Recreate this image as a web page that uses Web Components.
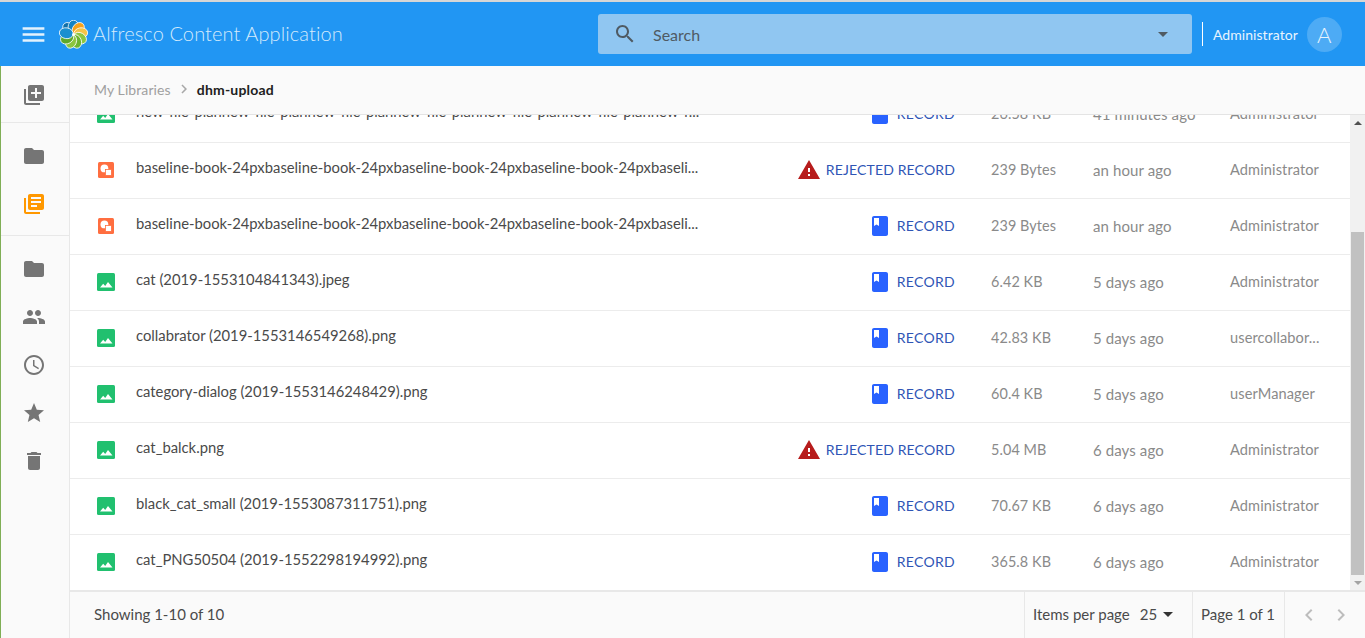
<!DOCTYPE html>
<html lang="en">
<head>
<meta charset="utf-8">
<title>Alfresco Content Application</title>
<style>
    html, body { margin: 0; height: 100%; overflow: hidden; }
    body { font-family: Lato, "Noto Sans", sans-serif; background: #fff; }
</style>
</head>
<body>
<aca-shell></aca-shell>

<script>
const ICONS = {
    menu: 'M3 18h18v-2H3v2zm0-5h18v-2H3v2zm0-7v2h18V6H3z',
    search: 'M15.5 14h-.79l-.28-.27C15.41 12.59 16 11.11 16 9.5 16 5.91 13.09 3 9.5 3S3 5.91 3 9.5 5.91 16 9.5 16c1.61 0 3.09-.59 4.23-1.57l.27.28v.79l5 4.99L20.49 19l-4.99-5zm-6 0C7.01 14 5 11.99 5 9.5S7.01 5 9.5 5 14 7.01 14 9.5 11.99 14 9.5 14z',
    libraryAdd: 'M4 6H2v14c0 1.1.9 2 2 2h14v-2H4V6zm16-4H8c-1.1 0-2 .9-2 2v12c0 1.1.9 2 2 2h12c1.1 0 2-.9 2-2V4c0-1.1-.9-2-2-2zm-1 9h-4v4h-2v-4H9V9h4V5h2v4h4v2z',
    libraryBooks: 'M4 6H2v14c0 1.1.9 2 2 2h14v-2H4V6zm16-4H8c-1.1 0-2 .9-2 2v12c0 1.1.9 2 2 2h12c1.1 0 2-.9 2-2V4c0-1.1-.9-2-2-2zm-1 9H9V9h10v2zm-4 4H9v-2h6v2zm4-8H9V5h10v2z',
    folder: 'M10 4H4c-1.1 0-1.99.9-1.99 2L2 18c0 1.1.9 2 2 2h16c1.1 0 2-.9 2-2V8c0-1.1-.9-2-2-2h-8l-2-2z',
    people: 'M16 11c1.66 0 2.99-1.34 2.99-3S17.66 5 16 5c-1.66 0-3 1.34-3 3s1.34 3 3 3zm-8 0c1.66 0 2.99-1.34 2.99-3S9.66 5 8 5C6.34 5 5 6.34 5 8s1.34 3 3 3zm0 2c-2.33 0-7 1.17-7 3.5V19h14v-2.5c0-2.33-4.67-3.5-7-3.5zm8 0c-.29 0-.62.02-.97.05 1.16.84 1.97 1.97 1.97 3.45V19h6v-2.5c0-2.33-4.67-3.5-7-3.5z',
    schedule: 'M11.99 2C6.47 2 2 6.48 2 12s4.47 10 9.99 10C17.52 22 22 17.52 22 12S17.52 2 11.99 2zM12 20c-4.42 0-8-3.58-8-8s3.58-8 8-8 8 3.58 8 8-3.58 8-8 8zm.5-13H11v6l5.25 3.15.75-1.23-4.5-2.67z',
    star: 'M12 17.27L18.18 21l-1.64-7.03L22 9.24l-7.19-.61L12 2 9.19 8.63 2 9.24l5.46 4.73L5.82 21z',
    trash: 'M6 19c0 1.1.9 2 2 2h8c1.1 0 2-.9 2-2V7H6v12zM19 4h-3.5l-1-1h-5l-1 1H5v2h14V4z',
    warning: 'M1 21h22L12 2 1 21zm12-3h-2v-2h2v2zm0-4h-2v-4h2v4z',
    book: 'M18 2H6c-1.1 0-2 .9-2 2v16c0 1.1.9 2 2 2h12c1.1 0 2-.9 2-2V4c0-1.1-.9-2-2-2zM6 4h5v8l-2.5-1.5L6 12V4z',
    chevronRight: 'M10 6L8.59 7.41 13.17 12l-4.58 4.59L10 18l6-6z',
    chevronLeft: 'M15.41 7.41L14 6l-6 6 6 6 1.41-1.41L10.83 12z',
    dropDown: 'M7 10l5 5 5-5z'
};

class AcaIcon extends HTMLElement {
    connectedCallback() {
        const size = this.getAttribute('size') || 24;
        const root = this.shadowRoot || this.attachShadow({ mode: 'open' });
        root.innerHTML = `
            <style>
                :host { display: inline-flex; flex: none; color: inherit; }
                svg { display: block; fill: currentColor; }
            </style>
            <svg width="${size}" height="${size}" viewBox="0 0 24 24"><path d="${ICONS[this.getAttribute('name')]}"/></svg>
        `;
    }
}

class AcaLogo extends HTMLElement {
    connectedCallback() {
        // petals of the flower, clockwise from the top left
        const colors = ['#0f6fa8', '#1583c4', '#f7a21b', '#f6c445', '#8cc63f', '#6db52f', '#8cc63f', '#5fa82a', '#1b8fcf'];
        const petals = colors.map((c, i) =>
            `<ellipse cx="15" cy="7.4" rx="5.6" ry="7.2" fill="${c}" stroke="#fff" stroke-width=".8" transform="rotate(${i * 40 - 40} 15 15)"/>`
        ).join('');
        this.attachShadow({ mode: 'open' }).innerHTML = `
            <style>:host { display: inline-flex; flex: none; }</style>
            <svg width="29" height="29" viewBox="0 0 30 30">${petals}<circle cx="15" cy="15" r="1.4" fill="#fff"/></svg>
        `;
    }
}

class AcaHeader extends HTMLElement {
    connectedCallback() {
        this.attachShadow({ mode: 'open' }).innerHTML = `
            <style>
                :host {
                    display: flex;
                    align-items: center;
                    height: 64px;
                    background: #2196f3;
                    color: #fff;
                    flex: none;
                }
                .menu { margin-left: 19px; color: #e3f2fd; }
                aca-logo { margin-left: 11px; }
                .title { margin: -2px 0 0 5px; font-size: 20px; font-weight: 300; letter-spacing: .1px; color: #d3eafc; width: 505px; white-space: nowrap; }
                .search {
                    display: flex;
                    align-items: center;
                    box-sizing: border-box;
                    width: 594px;
                    height: 40px;
                    padding: 0 17px 0 15px;
                    border-radius: 3px;
                    background: #90c6f1;
                    color: #4f5a63;
                    font-size: 16px;
                }
                .search span { margin-left: 16px; margin-top: 1px; flex: 1; }
                .sep { width: 1px; height: 24px; margin: 0 10px; background: #fff; }
                .user { font-size: 14px; letter-spacing: .05px; color: #e8f4fe; }
                .avatar {
                    display: flex;
                    align-items: center;
                    justify-content: center;
                    width: 35px;
                    height: 35px;
                    margin-left: 9px;
                    border-radius: 50%;
                    background: #4dabf5;
                    font-size: 22px;
                    font-weight: 300;
                    color: #e8f4fe;
                }
            </style>
            <aca-icon class="menu" name="menu" size="29"></aca-icon>
            <aca-logo></aca-logo>
            <div class="title">Alfresco Content Application</div>
            <div class="search">
                <aca-icon name="search"></aca-icon>
                <span>Search</span>
                <aca-icon name="dropDown" size="24"></aca-icon>
            </div>
            <div class="sep"></div>
            <div class="user">Administrator</div>
            <div class="avatar">A</div>
        `;
    }
}

class AcaSidebar extends HTMLElement {
    connectedCallback() {
        this.attachShadow({ mode: 'open' }).innerHTML = `
            <style>
                :host {
                    display: block;
                    box-sizing: border-box;
                    width: 70px;
                    flex: none;
                    border-left: 1px solid #7fae55;
                    border-right: 1px solid #e8e8e8;
                    background: #fafafa;
                    color: #757575;
                }
                .group { display: flex; flex-direction: column; align-items: center; gap: 24px; border-bottom: 1px solid #e8e8e8; }
                .group.create { padding: 17px 0 15px; }
                .group.views { padding: 21px 0 19px; }
                .group.nav { padding: 21px 0 0; border-bottom: 0; }
                .active { color: #ff9800; }
                aca-icon { margin-left: -2px; }
            </style>
            <div class="group create"><aca-icon name="libraryAdd"></aca-icon></div>
            <div class="group views">
                <aca-icon name="folder"></aca-icon>
                <aca-icon class="active" name="libraryBooks"></aca-icon>
            </div>
            <div class="group nav">
                <aca-icon name="folder"></aca-icon>
                <aca-icon name="people"></aca-icon>
                <aca-icon name="schedule"></aca-icon>
                <aca-icon name="star"></aca-icon>
                <aca-icon name="trash"></aca-icon>
            </div>
        `;
    }
}

class AcaBreadcrumb extends HTMLElement {
    connectedCallback() {
        this.attachShadow({ mode: 'open' }).innerHTML = `
            <style>
                :host {
                    display: flex;
                    align-items: center;
                    box-sizing: border-box;
                    height: 49px;
                    flex: none;
                    padding: 0 24px 2px;
                    border-bottom: 1px solid #e4e4e4;
                    background: #fafafa;
                    font-size: 14px;
                    color: #a0a0a0;
                }
                aca-icon { margin: 0 4px 0 4px; color: #a8a8a8; }
                span { letter-spacing: .1px; }
                b { color: #212121; font-weight: 700; letter-spacing: .2px; }
            </style>
            <span>My Libraries</span>
            <aca-icon name="chevronRight" size="18"></aca-icon>
            <b>dhm-upload</b>
        `;
    }
}

class AcaRow extends HTMLElement {
    connectedCallback() {
        const type = this.getAttribute('type');
        const rejected = this.hasAttribute('rejected');
        const thumb = type === 'media'
            ? `<svg width="16" height="16" viewBox="0 0 16 16"><rect width="16" height="16" rx="1.5" fill="#ff6e40"/><circle cx="6.4" cy="6.4" r="3.9" fill="#fff"/><rect x="7.4" y="7.4" width="6" height="6" fill="#fff" stroke="#ff6e40" stroke-width=".8"/></svg>`
            : `<svg width="18" height="18" viewBox="0 0 18 18"><rect width="18" height="18" rx="1.5" fill="#21c06f"/><path d="M3 14.5l3.2-3.8 2 2.2L11 9l4.5 5.5z" fill="#fff"/></svg>`;
        const status = rejected
            ? `<aca-icon class="warn" name="warning"></aca-icon><span>REJECTED RECORD</span>`
            : `<aca-icon class="book" name="book"></aca-icon><span>RECORD</span>`;
        this.attachShadow({ mode: 'open' }).innerHTML = `
            <style>
                :host {
                    display: grid;
                    grid-template-columns: 66px 578px 241px 138px 137px 1fr;
                    align-items: center;
                    box-sizing: border-box;
                    height: 56px;
                    padding-bottom: 2px;
                    border-bottom: 1px solid #ececec;
                    font-size: 15px;
                    letter-spacing: .1px;
                    color: #8a8a8a;
                    white-space: nowrap;
                }
                .thumb { display: flex; justify-content: center; width: 18px; margin-left: 27px; }
                .name { color: #4a4a4a; margin-top: -6px; font-size: 14.8px; letter-spacing: 0; overflow: hidden; }
                .status { display: flex; align-items: center; justify-content: flex-end; font-size: 14px; letter-spacing: .15px; color: #2f55b5; }
                .status span { margin-left: 5px; }
                .warn { color: #b71c1c; }
                .book { color: #2962ff; }
                .book + span { letter-spacing: .3px; }
                .size { padding-left: 36px; font-size: 14.4px; }
                .by { font-size: 14.6px; }
            </style>
            <div class="thumb">${thumb}</div>
            <div class="name"><slot name="name"></slot></div>
            <div class="status">${status}</div>
            <div class="size"><slot name="size"></slot></div>
            <div><slot name="modified"></slot></div>
            <div class="by"><slot name="by"></slot></div>
        `;
    }
}

class AcaScrollbar extends HTMLElement {
    connectedCallback() {
        this.attachShadow({ mode: 'open' }).innerHTML = `
            <style>
                :host { display: flex; flex-direction: column; width: 15px; flex: none; background: #f1f1f1; }
                .arrow { height: 15px; display: flex; align-items: center; justify-content: center; flex: none; }
                .up { border: 4px solid transparent; border-top: 0; border-bottom: 4px solid #505050; }
                .down { border: 4px solid transparent; border-bottom: 0; border-top: 4px solid #a3a3a3; }
                .track { flex: 1; padding-top: 102px; padding-left: 1px; }
                .thumb { height: 343px; width: 13px; background: #c1c1c1; }
            </style>
            <div class="arrow"><div class="up"></div></div>
            <div class="track"><div class="thumb"></div></div>
            <div class="arrow"><div class="down"></div></div>
        `;
    }
}

class AcaFooter extends HTMLElement {
    connectedCallback() {
        this.attachShadow({ mode: 'open' }).innerHTML = `
            <style>
                :host {
                    display: flex;
                    align-items: stretch;
                    box-sizing: border-box;
                    height: 48px;
                    flex: none;
                    border-top: 2px solid #e8e8e8;
                    background: #fafafa;
                    font-size: 15px;
                    color: #4a4a4a;
                }
                .cell { display: flex; align-items: center; box-sizing: border-box; border-left: 1px solid #e8e8e8; padding-bottom: 2px; }
                .range { flex: 1; border: 0; padding-left: 24px; }
                .size { width: 168px; padding-left: 8px; }
                .size b { font-weight: 400; margin-left: 10px; }
                .size aca-icon { margin-left: -1px; color: #333; }
                .page { width: 92px; padding-left: 8px; }
                .nav { width: 81px; gap: 8px; padding-left: 12px; padding-bottom: 0; color: #bdbdbd; }
            </style>
            <div class="cell range">Showing 1-10 of 10</div>
            <div class="cell size">Items per page <b>25</b><aca-icon name="dropDown"></aca-icon></div>
            <div class="cell page">Page 1 of 1</div>
            <div class="cell nav"><aca-icon name="chevronLeft"></aca-icon><aca-icon name="chevronRight"></aca-icon></div>
        `;
    }
}

class AcaShell extends HTMLElement {
    connectedCallback() {
        const plan = 'new-file-plan'.repeat(6) + 'new-f...';
        const book = 'baseline-book-24px'.repeat(4) + 'baseli...';
        const rows = [
            ['image', plan, '', '26.58 KB', '41 minutes ago', 'Administrator'],
            ['media', book, 'rejected', '239 Bytes', 'an hour ago', 'Administrator'],
            ['media', book, '', '239 Bytes', 'an hour ago', 'Administrator'],
            ['image', 'cat (2019-1553104841343).jpeg', '', '6.42 KB', '5 days ago', 'Administrator'],
            ['image', 'collabrator (2019-1553146549268).png', '', '42.83 KB', '5 days ago', 'usercollabor...'],
            ['image', 'category-dialog (2019-1553146248429).png', '', '60.4 KB', '5 days ago', 'userManager'],
            ['image', 'cat_balck.png', 'rejected', '5.04 MB', '6 days ago', 'Administrator'],
            ['image', 'black_cat_small (2019-1553087311751).png', '', '70.67 KB', '6 days ago', 'Administrator'],
            ['image', 'cat_PNG50504 (2019-1552298194992).png', '', '365.8 KB', '6 days ago', 'Administrator']
        ].map(([type, name, flag, size, modified, by]) => `
            <aca-row type="${type}" ${flag}>
                <span slot="name">${name}</span>
                <span slot="size">${size}</span>
                <span slot="modified">${modified}</span>
                <span slot="by">${by}</span>
            </aca-row>`).join('');

        this.attachShadow({ mode: 'open' }).innerHTML = `
            <style>
                :host { display: flex; flex-direction: column; box-sizing: border-box; height: 638px; border-top: 2px solid #d6d6d6; background: #fff; font-family: Lato, "Noto Sans", sans-serif; }
                .body { display: flex; flex: 1; min-height: 0; }
                main { display: flex; flex-direction: column; flex: 1; min-width: 0; }
                .scroller { display: flex; flex: 1; min-height: 0; overflow: hidden; }
                .rows { flex: 1; min-width: 0; margin-top: -28px; }
            </style>
            <aca-header></aca-header>
            <div class="body">
                <aca-sidebar></aca-sidebar>
                <main>
                    <aca-breadcrumb></aca-breadcrumb>
                    <div class="scroller">
                        <div class="rows">${rows}</div>
                        <aca-scrollbar></aca-scrollbar>
                    </div>
                    <aca-footer></aca-footer>
                </main>
            </div>
        `;
    }
}

// children first, so they are ready when the shell renders them
customElements.define('aca-icon', AcaIcon);
customElements.define('aca-logo', AcaLogo);
customElements.define('aca-header', AcaHeader);
customElements.define('aca-sidebar', AcaSidebar);
customElements.define('aca-breadcrumb', AcaBreadcrumb);
customElements.define('aca-row', AcaRow);
customElements.define('aca-scrollbar', AcaScrollbar);
customElements.define('aca-footer', AcaFooter);
customElements.define('aca-shell', AcaShell);
</script>
</body>
</html>
